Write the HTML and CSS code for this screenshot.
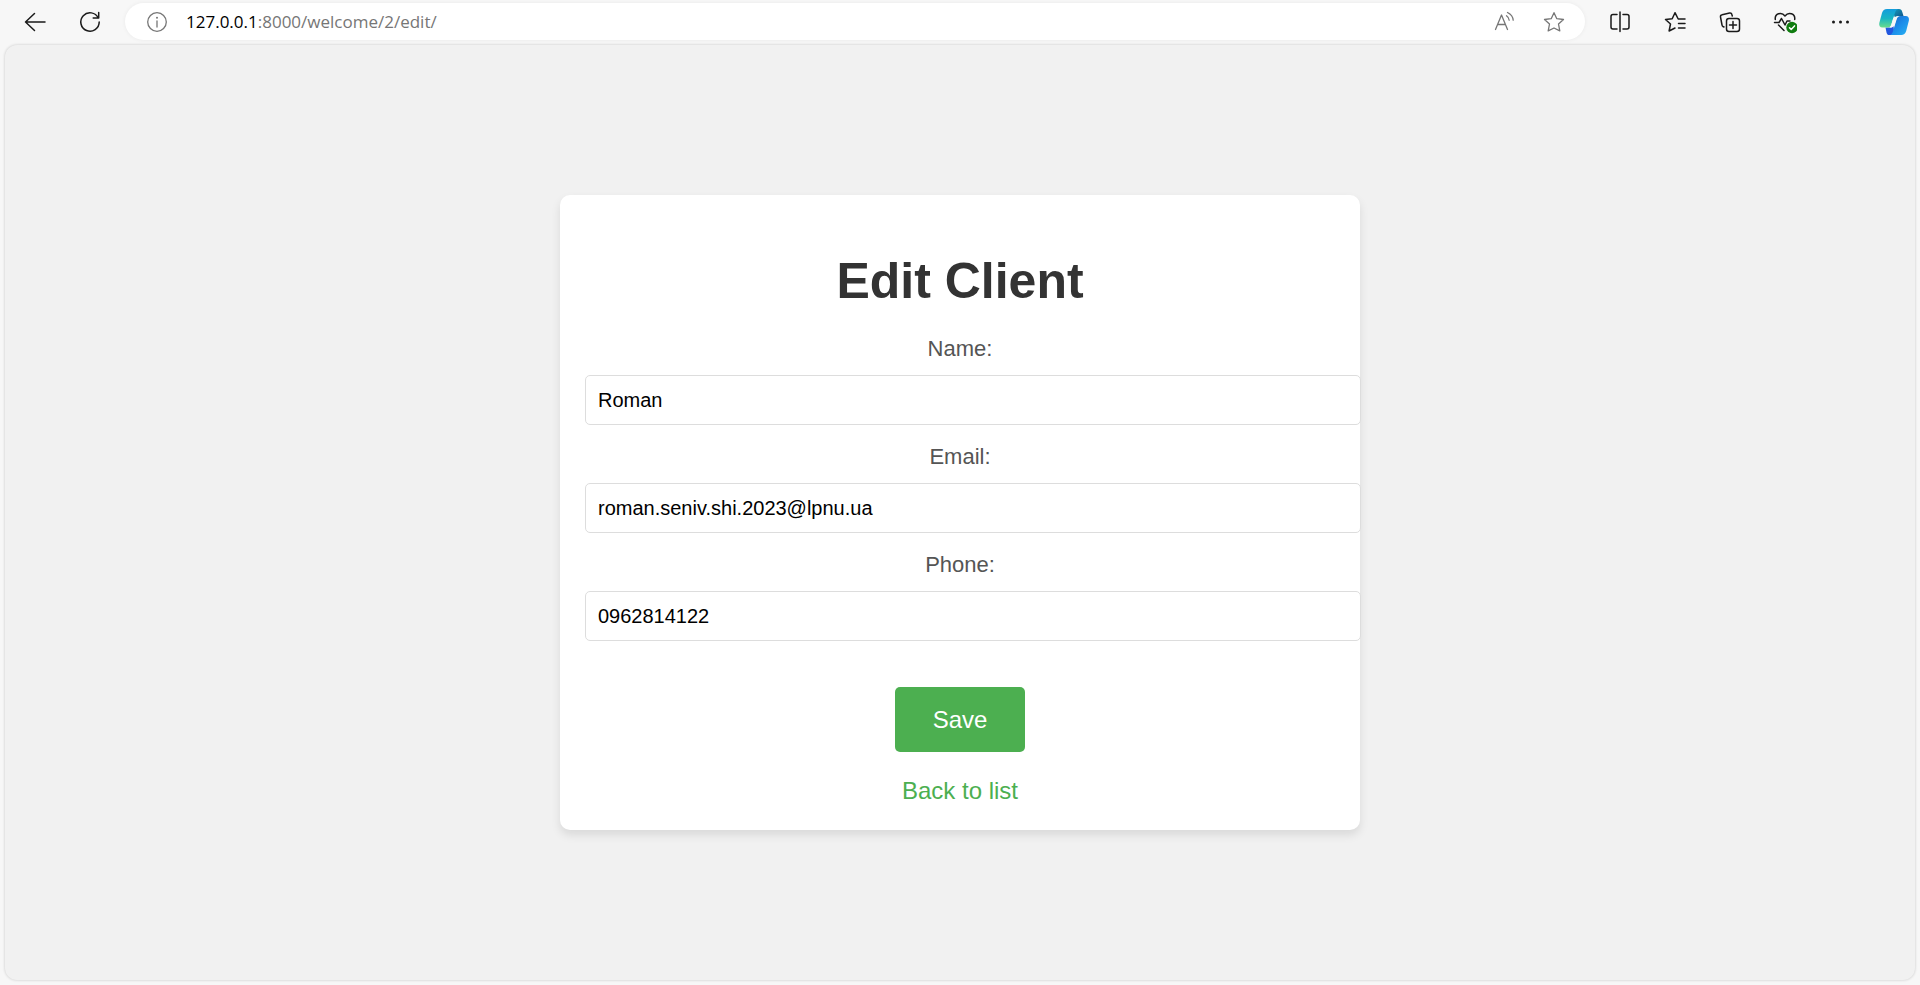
FILE: index.html
```html
<!DOCTYPE html>
<html lang="en">
<head>
<meta charset="utf-8">
<meta name="viewport" content="width=device-width, initial-scale=1">
<title>Edit Client</title>
<link rel="stylesheet" href="styles.css">
</head>
<body>
<header class="toolbar">
  <button class="tool" type="button" aria-label="Back">
    <svg class="icon" viewBox="0 0 24 24"><path d="M22 12H2.500M11.500 3.500L2.500 12l9 8.500"/></svg>
  </button>
  <button class="tool" type="button" aria-label="Refresh">
    <svg class="icon" viewBox="0 0 24 24"><path d="M20.300 8A9.200 9.200 0 1 0 21.200 12M20.700 2.500V8H15.200"/></svg>
  </button>
  <div class="address">
    <svg class="icon icon-muted" viewBox="0 0 24 24"><circle cx="12" cy="12" r="9.300"/><path d="M12 11v6"/><circle class="dot" cx="12" cy="7.800" r="1"/></svg>
    <div class="url" role="textbox" aria-label="Address" tabindex="0"><span class="host">127.0.0.1</span>:8000/welcome/2/edit/</div>
    <button class="address-tool" type="button" aria-label="Read aloud">
      <svg class="icon icon-muted" viewBox="0 0 24 24"><path d="M3.500 19.500L9.500 5L15.500 19.500M5.500 14.500h8M14.500 5.800c1.600 1.100 2.500 2.500 2.700 4.400M15.500 2.500c3.500 1.800 5.500 4.300 5.700 7.700"/></svg>
    </button>
    <button class="address-tool" type="button" aria-label="Add to favorites">
      <svg class="icon icon-muted" viewBox="0 0 24 24"><path d="M12 2.700l2.800 6 6.700.8-5 4.500 1.300 6.900L12 18l-5.800 2.900L7.500 14l-5-4.500 6.700-.8z"/></svg>
    </button>
  </div>
  <button class="tool" type="button" aria-label="Split screen">
    <svg class="icon" viewBox="0 0 24 24"><path d="M12 2v19.500M9 4.500H5a2 2 0 0 0-2 2v10.500a2 2 0 0 0 2 2h4M15 4.500h4a2 2 0 0 1 2 2v10.500a2 2 0 0 1-2 2h-4"/></svg>
  </button>
  <button class="tool" type="button" aria-label="Favorites">
    <svg class="icon" viewBox="0 0 24 24"><path d="M22 9h-6.800L12 2.700 9.200 8.700l-6.700.8 5 4.500-1.400 7L12 18M15.500 13.500H22M15.500 18H22"/></svg>
  </button>
  <button class="tool" type="button" aria-label="Collections">
    <svg class="icon" viewBox="0 0 24 24"><rect x="8.500" y="8.500" width="13" height="13" rx="2.500"/><path d="M15 11.500v7M11.500 15h7M6 17l-1-.5a2 2 0 0 1-1-1.500L2.500 7a2 2 0 0 1 1.600-2.300l7.500-1.700a2 2 0 0 1 2.300 1.500l.4 1.500"/></svg>
  </button>
  <button class="tool" type="button" aria-label="Browser essentials">
    <svg class="icon" viewBox="0 0 24 24"><path d="M2.300 9.500C1.500 3.500 8.500 1.500 12 6 15.500 1.500 22.500 3.500 21.700 9.500M1.500 12.500h4.500l2.500-4 3.500 6.500 2-4h3M5.500 15l5.500 5.500"/><circle class="ok" cx="19" cy="17.500" r="5.700"/><path class="tick" d="M16.500 17.700l1.700 1.700 3.300-3.500"/></svg>
  </button>
  <button class="tool" type="button" aria-label="Settings and more">
    <svg class="icon" viewBox="0 0 24 24"><circle class="dot" cx="5.500" cy="12" r="1.500"/><circle class="dot" cx="12.500" cy="12" r="1.500"/><circle class="dot" cx="19.500" cy="12" r="1.500"/></svg>
  </button>
  <button class="tool tool-last" type="button" aria-label="Copilot">
    <svg class="copilot" viewBox="0 0 32 32">
      <defs>
        <linearGradient id="teal" x1="0" y1="0" x2="0" y2="1"><stop offset="0" stop-color="#149cdc"/><stop offset=".5" stop-color="#18b5c4"/><stop offset="1" stop-color="#69dc8b"/></linearGradient>
        <linearGradient id="blue" x1="0" y1="0" x2="1" y2="1"><stop offset="0" stop-color="#1b62c4"/><stop offset=".5" stop-color="#1c8cea"/><stop offset="1" stop-color="#28b4f2"/></linearGradient>
        <linearGradient id="fold" x1="0" y1="0" x2="1" y2="1"><stop offset="0" stop-color="#14a0c0"/><stop offset="1" stop-color="#124f86"/></linearGradient>
      </defs>
      <path fill="url(#fold)" d="M14 3h7c1.800 0 2.700 1 3.200 2.700L25.500 10H21c-2 0-3 .6-4 2z"/>
      <path fill="#2257df" d="M7.500 21.500H12c1.800 0 2.800-.6 3.500-2l.5 5-2 4.500h-2.500c-1.800 0-2.600-1-3-2.600z"/>
      <path fill="url(#teal)" d="M9 3h11.500c-2 .3-2.800 1.800-3.400 3.600L13.500 18c-.7 2.400-1.700 3.600-4.200 3.600H4.500C1.800 21.600.8 19.600 1.300 17L4 7C4.900 4.300 6.300 3 9 3z"/>
      <path fill="url(#blue)" d="M22.800 10h4.700c2.700 0 3.900 2 3.400 4.600L28.200 25c-.9 2.700-2.300 4-5 4H11.500c2-.3 2.800-1.800 3.400-3.600L18.600 13.600c.7-2.400 1.700-3.600 4.200-3.600z"/>
      <path fill="#f7f7f7" d="M20.500 10.200c-3.500 0-5 .8-5.700 3.300l-1.600 5.700c-.4 1.200-1 2-2 2.300 3.500 0 4.800-.8 5.500-3.300l1.800-5.700c.4-1.200 1-2 2-2.300z"/>
    </svg>
  </button>
</header>
<main class="page">
  <section class="card">
    <h1 class="title">Edit Client</h1>
    <form class="form">
      <div class="field">
        <label class="label" for="name">Name:</label>
        <input class="input" id="name" name="name" type="text" value="Roman">
      </div>
      <div class="field">
        <label class="label" for="email">Email:</label>
        <input class="input" id="email" name="email" type="email" value="roman.seniv.shi.2023@lpnu.ua">
      </div>
      <div class="field">
        <label class="label" for="phone">Phone:</label>
        <input class="input" id="phone" name="phone" type="text" value="0962814122">
      </div>
      <button class="save" type="submit">Save</button>
    </form>
    <a class="back" href="#">Back to list</a>
  </section>
</main>
</body>
</html>
```
FILE: styles.css
```css
body {
  margin: 0;
  min-height: 100vh;
  display: flex;
  flex-direction: column;
  background: #f7f7f7;
  font-family: "Liberation Sans", Arial, sans-serif;
}

/* Browser toolbar */
.toolbar {
  display: flex;
  align-items: center;
  flex: none;
  height: 45px;
  padding: 0 0 2px 7px;
  box-sizing: border-box;
}

.tool,
.address-tool {
  display: flex;
  align-items: center;
  justify-content: center;
  flex: none;
  width: 55px;
  height: 36px;
  padding: 0;
  border: 0;
  background: none;
}

.tool-last {
  width: 53px;
}

.address-tool {
  width: 50px;
}

.icon {
  flex: none;
  width: 24px;
  height: 24px;
  fill: none;
  stroke: #1a1a1a;
  stroke-width: 1.5;
  stroke-linecap: round;
  stroke-linejoin: round;
}

.icon-muted {
  stroke: #767676;
  stroke-width: 1.3;
}

.dot {
  fill: #1a1a1a;
  stroke: none;
}

.icon-muted .dot {
  fill: #767676;
}

.ok {
  fill: #107c10;
  stroke: none;
}

.tick {
  stroke: #fff;
}

.copilot {
  width: 32px;
  height: 32px;
}

.address {
  display: flex;
  align-items: center;
  flex: 1;
  height: 37px;
  margin: 0 7px 0 8px;
  padding: 0 6px 0 20px;
  box-sizing: border-box;
  border-radius: 19px;
  background: #fff;
  box-shadow: 0 0 4px rgba(0, 0, 0, 0.06);
}

.url {
  flex: 1;
  margin-left: 17px;
  color: #767676;
  font-family: "Open Sans", "Noto Sans", sans-serif;
  font-size: 17px;
  line-height: 24px;
}

.host {
  color: #000;
}

/* Page */
.page {
  flex: 1;
  display: flex;
  align-items: center;
  justify-content: center;
  margin: 0 5px 5px;
  border-radius: 12px;
  background: #f1f1f1;
  box-shadow: 0 0 3px rgba(0, 0, 0, 0.2);
}

.card {
  width: 100%;
  max-width: 800px;
  padding: 25px;
  box-sizing: border-box;
  border-radius: 10px;
  background: #fff;
  box-shadow: 0 5px 10px rgba(0, 0, 0, 0.1);
  text-align: center;
}

.title {
  margin: 32px 0 26px;
  color: #333;
  font-size: 50px;
  line-height: 58px;
}

.form {
  display: flex;
  flex-direction: column;
  gap: 19px;
}

.label {
  display: block;
  margin-bottom: 14px;
  color: #555;
  font-size: 22px;
  line-height: 25px;
}

.input {
  display: block;
  width: 100%;
  height: 24px;
  padding: 12px;
  border: 1px solid #ddd;
  border-radius: 5px;
  background: #fff;
  color: #000;
  font-family: inherit;
  font-size: 20px;
}

.save {
  align-self: center;
  margin: 27px 0 25px;
  padding: 18px 38px;
  border: 0;
  border-radius: 5px;
  background: #4caf50;
  color: #fff;
  font-family: inherit;
  font-size: 24px;
  line-height: 29px;
}

.back {
  display: block;
  color: #4caf50;
  font-size: 24px;
  line-height: 28px;
  text-decoration: none;
}
```
